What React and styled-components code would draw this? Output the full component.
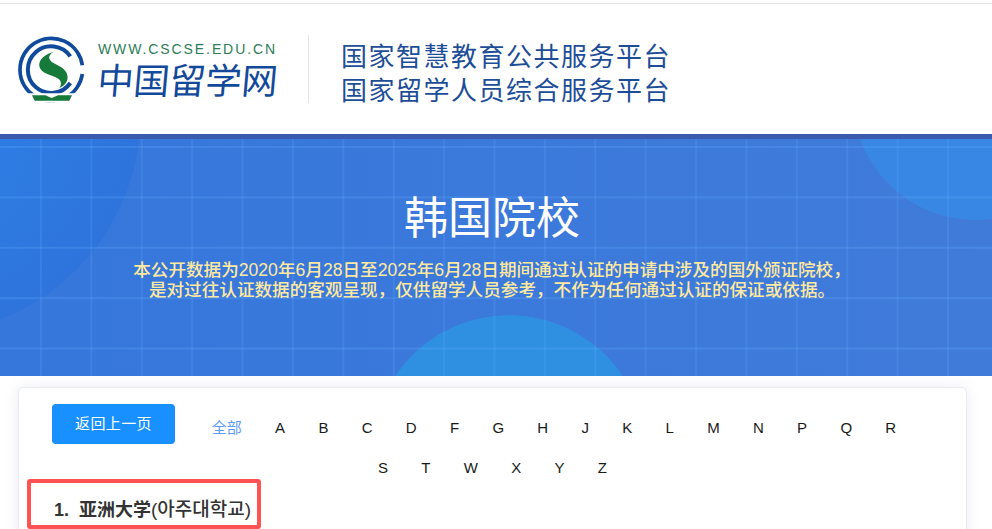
import React from 'react';
import styled, { createGlobalStyle } from 'styled-components';

const GlobalStyle = createGlobalStyle`
  html, body {
    margin: 0;
    padding: 0;
    background: #fff;
    overflow: hidden;
  }
  body {
    font-family: "Liberation Sans", "Noto Sans CJK SC", sans-serif;
  }
`;

const Page = styled.div`
  height: 529px;
  padding-top: 3px;
  box-sizing: border-box;
  overflow: hidden;
`;

const Header = styled.header`
  height: 131px;
  box-sizing: border-box;
  border-top: 1px solid #e6e6e6;
  padding-left: 18px;
  display: flex;
  align-items: center;
`;

const LogoGroup = styled.div`
  display: flex;
  align-items: center;
  gap: 10px;
  width: 290px;
  margin-top: 2px;
`;

const LogoWords = styled.div`
  display: flex;
  flex-direction: column;
`;

const LogoUrl = styled.div`
  font-size: 14px;
  line-height: 16px;
  letter-spacing: 1.9px;
  color: #2c7d57;
  white-space: nowrap;
`;

const LogoName = styled.div`
  font-family: "Noto Sans CJK SC", sans-serif;
  font-size: 36px;
  line-height: 42px;
  font-weight: 400;
  color: #12499b;
  white-space: nowrap;
  transform: skewX(-5deg);
`;

const Divider = styled.div`
  width: 1px;
  height: 68px;
  background: #e4e4e4;
  margin-right: 32px;
`;

const Slogan = styled.div`
  font-family: "Noto Sans CJK SC", sans-serif;
  font-size: 26px;
  line-height: 34px;
  letter-spacing: 1.5px;
  color: #1d4d97;
  white-space: nowrap;
  margin-top: 6px;
`;

const Hero = styled.section`
  height: 242px;
  box-sizing: border-box;
  border-top: 5px solid #3a5bae;
  text-align: center;
  padding: 49px 8px 0 0;
  background-color: #3c79da;
  background-image:
    linear-gradient(to right, rgba(100, 175, 255, 0.18) 2px, transparent 2px),
    linear-gradient(to bottom, rgba(100, 175, 255, 0.24) 2px, transparent 2px),
    radial-gradient(circle 137px at 509px 313px, #2f90e2 99.6%, transparent 100%),
    radial-gradient(circle 122px at 975px -41px, #3887e4 99.6%, transparent 100%),
    radial-gradient(circle 221px at -80px -25px, #2d82e8 0%, #2e74dc 99.7%, transparent 100%),
    linear-gradient(to right, #3677dc, #407bd9);
  background-size: 50.4px 100%, 100% 50.4px, 100% 100%, 100% 100%, 100% 100%, 100% 100%;
  background-position: 40px 0, 0 7px, 0 0, 0 0, 0 0, 0 0;
  background-repeat: repeat-x, repeat-y, no-repeat, no-repeat, no-repeat, no-repeat;
`;

const HeroTitle = styled.h1`
  margin: 0;
  font-size: 44px;
  line-height: 62px;
  font-weight: 400;
  color: #fff;
`;

const HeroNote = styled.p`
  margin: 10px 0 0;
  font-size: 17.6px;
  line-height: 20px;
  font-weight: 500;
  color: #ffe9a0;
`;

const Card = styled.main`
  width: 949px;
  box-sizing: border-box;
  margin: 11px 0 0 18px;
  padding: 17px 33px 0;
  min-height: 300px;
  background: #fff;
  border: 1px solid #e9eaf3;
  border-radius: 5px;
  box-shadow: 0 0 14px rgba(120, 125, 170, 0.14);
`;

const Nav = styled.nav`
  padding: 3px 4px 0;
  text-align: center;

  &::after {
    content: "";
    display: block;
    clear: both;
  }
`;

const BackButton = styled.button`
  float: left;
  width: 123px;
  height: 40px;
  margin: -4px 4px 0 -4px;
  padding: 0 0 3px;
  border: 0;
  border-radius: 4px;
  background: #1890ff;
  color: #fff;
  font-family: inherit;
  font-size: 15px;
  letter-spacing: 0.4px;
`;

const LetterLink = styled.a`
  display: inline-block;
  padding: 0 16.65px;
  font-size: 15px;
  line-height: 40px;
  color: ${(p) => (p.$active ? '#5a9cf8' : '#1a1a1a')};
`;

const SchoolTitle = styled.h2`
  position: relative;
  margin: 7px 0 0 2px;
  font-size: 18px;
  line-height: 30px;
  font-weight: 700;
  color: #333;
  white-space: pre;
`;

const KoreanName = styled.span`
  font-family: "Liberation Sans", "Noto Sans CJK KR", sans-serif;
  font-size: 19px;
  font-weight: 500;
`;

const RedMark = styled.div`
  position: absolute;
  left: -27px;
  top: -16px;
  width: 234px;
  height: 50px;
  box-sizing: border-box;
  border: 4px solid #ff5252;
  border-radius: 3px;
`;

const LETTERS = ['A', 'B', 'C', 'D', 'F', 'G', 'H', 'J', 'K', 'L', 'M', 'N', 'P', 'Q', 'R', 'S', 'T', 'W', 'X', 'Y', 'Z'];

function LogoMark() {
  return (
    <svg width="70" height="75" viewBox="24 15 210 225" aria-hidden="true">
      <g fill="none" stroke="#0f4a9c">
        <path d="M217 112 A94 94 0 1 0 217 138" strokeWidth="11" />
        <path d="M181 85 A70 70 0 1 0 181 165" strokeWidth="12" />
      </g>
      <path
        fill="#157a3a"
        d="M136 70 C105 78 85 95 88 115 C92 138 125 140 145 152 C155 160 155 170 148 180 C168 172 178 155 170 135 C160 112 122 108 118 92 C116 82 124 74 136 70 Z"
      />
      <path fill="#fff" d="M52 196 H198 V224 H52 Z" />
      <path fill="#157a3a" d="M66 202 L106 202 L125 210 L144 202 L186 202 L178 218 L74 218 Z" />
    </svg>
  );
}

export default function App() {
  return (
    <Page>
      <GlobalStyle />
      <Header>
        <LogoGroup>
          <LogoMark />
          <LogoWords>
            <LogoUrl>WWW.CSCSE.EDU.CN</LogoUrl>
            <LogoName>中国留学网</LogoName>
          </LogoWords>
        </LogoGroup>
        <Divider />
        <Slogan>
          国家智慧教育公共服务平台
          <br />
          国家留学人员综合服务平台
        </Slogan>
      </Header>

      <Hero>
        <HeroTitle>韩国院校</HeroTitle>
        <HeroNote>
          本公开数据为2020年6月28日至2025年6月28日期间通过认证的申请中涉及的国外颁证院校，
          <br />
          是对过往认证数据的客观呈现，仅供留学人员参考，不作为任何通过认证的保证或依据。
        </HeroNote>
      </Hero>

      <Card>
        <Nav>
          <BackButton>返回上一页</BackButton>
          <LetterLink $active>全部</LetterLink>
          {LETTERS.map((letter) => (
            <LetterLink key={letter}>{letter}</LetterLink>
          ))}
        </Nav>
        <SchoolTitle>
          {'1.  亚洲大学'}
          <KoreanName>(아주대학교)</KoreanName>
          <RedMark />
        </SchoolTitle>
      </Card>
    </Page>
  );
}
